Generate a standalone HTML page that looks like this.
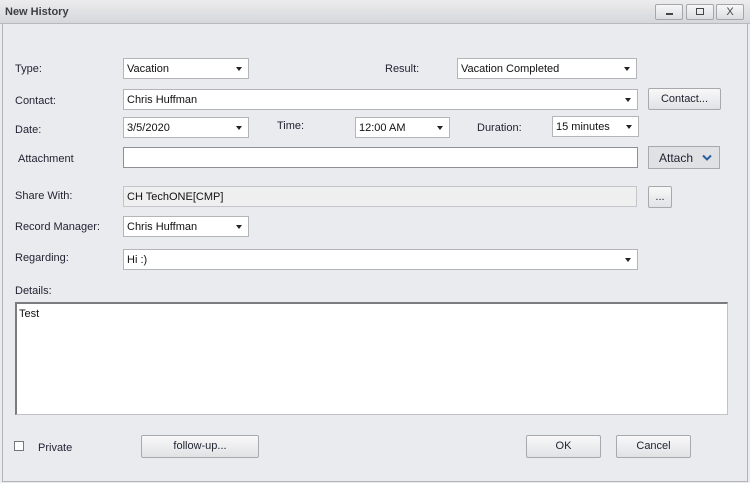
<!DOCTYPE html>
<html><head><style>
*{box-sizing:border-box;margin:0;padding:0}
body{width:750px;height:483px;background:#eaebef;font-family:"Liberation Sans",sans-serif;font-size:11px;color:#1e2230;position:relative;overflow:hidden}
.a{position:absolute}
.title{left:0;top:0;width:750px;height:24px;background:linear-gradient(#ececee,#d6d7db);border-bottom:1px solid #b8b9bd}
.wb{top:4px;width:28px;height:16px;border:1px solid #a5a6aa;border-radius:2px;background:linear-gradient(#f7f7f8,#dcdde0);text-align:center;font-size:9px;line-height:14px;color:#444;font-weight:bold}
.frame{left:2px;top:24px;width:746px;height:458px;border:1px solid #b3b4b8;border-top:none;background:#eaebef}
.l{font-size:11px}
.dd{background:#fff;border:1px solid #b4b5b9;height:21px;padding:4px 0 0 3px;font-size:11px;color:#111}
.dd:after{content:"";position:absolute;right:6px;top:8px;border-left:3.5px solid transparent;border-right:3.5px solid transparent;border-top:4px solid #222}
.btn{border:1px solid #a8a9ad;border-radius:2px;background:linear-gradient(#f8f8f9,#e1e2e5);text-align:center;font-size:11px}
</style></head><body>
<div class="a title"></div>
<div class="a" style="left:5px;top:6px;font-weight:bold;color:#3d3f45">New History</div>
<div class="a wb" style="left:655px"><span style="display:inline-block;width:7px;height:2px;background:#444;margin-top:8px;vertical-align:top"></span></div>
<div class="a wb" style="left:686px"><span style="display:inline-block;width:8px;height:7px;border:1.5px solid #444;margin-top:3px;vertical-align:top"></span></div>
<div class="a wb" style="left:716px;font-weight:normal;font-size:11px">X</div>
<div class="a frame"></div>

<div class="a l" style="left:15px;top:63px">Type:</div>
<div class="a dd" style="left:123px;top:58px;width:126px">Vacation</div>
<div class="a l" style="left:385px;top:63px">Result:</div>
<div class="a dd" style="left:457px;top:58px;width:180px">Vacation Completed</div>

<div class="a l" style="left:15px;top:95px">Contact:</div>
<div class="a dd" style="left:123px;top:89px;width:515px">Chris Huffman</div>
<div class="a btn" style="left:648px;top:88px;width:73px;height:22px;line-height:20px">Contact...</div>

<div class="a l" style="left:15px;top:124px">Date:</div>
<div class="a dd" style="left:123px;top:117px;width:126px">3/5/2020</div>
<div class="a l" style="left:277px;top:120px">Time:</div>
<div class="a dd" style="left:355px;top:117px;width:95px">12:00 AM</div>
<div class="a l" style="left:477px;top:122px">Duration:</div>
<div class="a dd" style="left:552px;top:116px;width:87px">15 minutes</div>

<div class="a l" style="left:18px;top:153px">Attachment</div>
<div class="a" style="left:123px;top:147px;width:515px;height:21px;background:#fff;border:1px solid #8e9095"></div>
<div class="a" style="left:648px;top:146px;width:72px;height:23px;border:1px solid #a8a9ad;background:#e0e1e4"></div>
<div class="a" style="left:659px;top:151px;font-size:12px">Attach</div>
<svg class="a" style="left:702px;top:154px" width="10" height="7" viewBox="0 0 10 7"><path d="M1 1.5L5 5.5L9 1.5" fill="none" stroke="#2c5f9e" stroke-width="2"/></svg>

<div class="a l" style="left:15px;top:190px">Share With:</div>
<div class="a" style="left:123px;top:186px;width:514px;height:21px;background:#efefef;border:1px solid #c5c6ca;padding:4px 0 0 3px;color:#111">CH TechONE[CMP]</div>
<div class="a btn" style="left:648px;top:186px;width:24px;height:22px;line-height:20px">...</div>

<div class="a l" style="left:15px;top:221px">Record Manager:</div>
<div class="a dd" style="left:123px;top:216px;width:126px">Chris Huffman</div>

<div class="a l" style="left:15px;top:252px">Regarding:</div>
<div class="a dd" style="left:123px;top:249px;width:515px">Hi :)</div>

<div class="a l" style="left:15px;top:285px">Details:</div>
<div class="a" style="left:15px;top:302px;width:713px;height:113px;background:#fff;border:1px solid #c2c3c7;border-left:2px solid #7a7c80;border-top:2px solid #7a7c80;padding:4px 0 0 2px;color:#111">Test</div>

<div class="a" style="left:14px;top:441px;width:10px;height:10px;border:1px solid #777;background:#fff"></div>
<div class="a l" style="left:38px;top:442px">Private</div>
<div class="a btn" style="left:141px;top:435px;width:118px;height:23px;line-height:21px">follow-up...</div>
<div class="a btn" style="left:526px;top:435px;width:75px;height:23px;line-height:21px">OK</div>
<div class="a btn" style="left:616px;top:435px;width:75px;height:23px;line-height:21px">Cancel</div>
</body></html>
